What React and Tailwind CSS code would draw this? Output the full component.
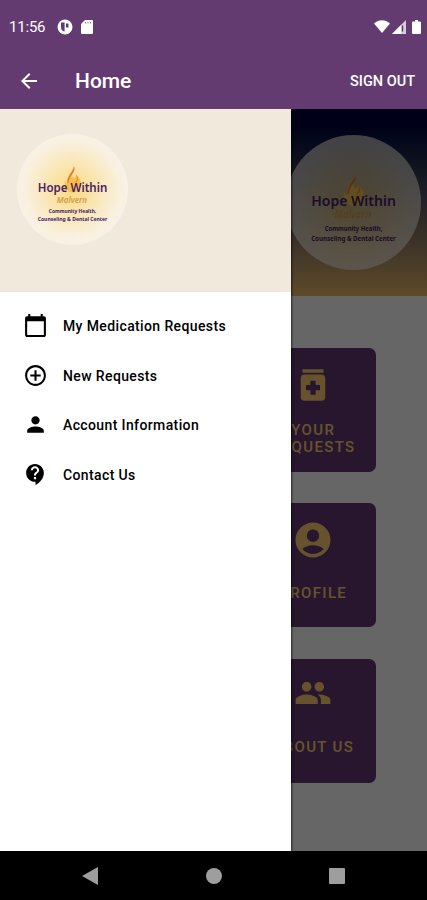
import {
  MdAccountCircle,
  MdArrowBack,
  MdCalendarToday,
  MdContactSupport,
  MdControlPoint,
  MdGroup,
  MdMedication,
  MdPerson,
} from 'react-icons/md';

const menuItems = [
  { label: 'My Medication Requests', icon: MdCalendarToday },
  { label: 'New Requests', icon: MdControlPoint },
  { label: 'Account Information', icon: MdPerson },
  { label: 'Contact Us', icon: MdContactSupport },
];

const Logo = ({ id, className, discOpacity }) => (
  <svg viewBox="0 0 110 110" className={className}>
    <defs>
      <radialGradient id={id}>
        <stop offset="0" stopColor="#fbda80" />
        <stop offset="0.45" stopColor="#fae6b2" />
        <stop offset="0.85" stopColor="#f9f0de" />
        <stop offset="1" stopColor="#f8f1e6" />
      </radialGradient>
    </defs>
    <circle cx="55" cy="55" r="55" fill={`url(#${id})`} opacity={discOpacity} />
    <path d="M56.500 32c1 3-1 6-2 8 0 3 2 4 3 3 1-1 1-2 1-3 4 4 7 9 4 14-2 3-5 4-8 4-5-1-8-6-7-12 .5 2 1 3 2 3-1-7 5-10 7-17z" fill="#f7c04a" />
    <path d="M56.500 32c-1 6-7 9-6.500 17 2-1 1-4 3-7 2-3 5-5 3.500-10z" fill="#e2753a" />
    <path d="M58 40c2 3 2 6-1 8 4 0 5-4 1-8z" fill="#e88a3c" />
    <g textAnchor="middle" fontFamily="'Noto Sans', sans-serif" fontWeight="700" fill="#472069">
      <text x="55" y="57.8" fontSize="11.8" fontWeight="600" textLength="69" lengthAdjust="spacingAndGlyphs">Hope Within</text>
      <text x="54.5" y="68" fontSize="8" fontStyle="italic" fontWeight="600" fill="#cf9c4d" textLength="30" lengthAdjust="spacingAndGlyphs">Malvern</text>
      <text x="55" y="78.5" fontSize="5.6" textLength="47" lengthAdjust="spacingAndGlyphs">Community Health,</text>
      <text x="55" y="86.2" fontSize="5.6" textLength="69" lengthAdjust="spacingAndGlyphs">Counseling &amp; Dental Center</text>
    </g>
  </svg>
);

const StatusBar = () => (
  <div className="flex h-[53px] items-center justify-between pl-[9px] pr-[6px]">
    <div className="flex items-center">
      <span className="w-[37px] pt-px text-[15px] tracking-[-0.2px]">11:56</span>
      <svg viewBox="0 0 16 16" className="ml-[10.5px] size-4">
        <circle cx="8" cy="8" r="7.5" fill="#fff" />
        <path d="M4 3.500h3.600v9C5 12 4 10.500 4 8zM9 4.500h2.500v4H9z" fill="#643b71" />
      </svg>
      <svg viewBox="0 0 12 14" className="ml-2 h-[14px] w-3">
        <path d="M4 0h7q1 0 1 1v12q0 1-1 1H1q-1 0-1-1V4z" fill="#fff" />
        <path d="M4.500 2v1.500M7 2v1.500M9.500 2v1.500" stroke="#643b71" strokeWidth="0.7" />
      </svg>
    </div>
    <div className="flex items-center">
      <svg viewBox="0 0 16 13" className="mr-0.5 h-[13px] w-4">
        <path d="M0 3.500C4.500-1 11.500-1 16 3.500L8 13z" fill="#fff" />
      </svg>
      <svg viewBox="0 0 14 14" className="size-[14px]">
        <path d="M0 14L14 0v14z" fill="#fff" fillOpacity="0.75" />
        <path d="M0 14L9 5v9z" fill="#fff" />
        <path d="M10.500 5.500v6" stroke="#643b71" strokeWidth="1.500" />
      </svg>
      <svg viewBox="0 0 9 14" className="ml-[6px] h-[14px] w-[9px]">
        <path d="M3 0h3v1.500h2q1 0 1 1V13q0 1-1 1H1q-1 0-1-1V2.500q0-1 1-1h2z" fill="#fff" />
      </svg>
    </div>
  </div>
);

const Card = ({ children }) => (
  <div className="flex h-[124px] w-[124.500px] flex-col items-center rounded-[7px] bg-[#613874] text-center text-[15px] font-medium leading-[17.5px] tracking-[1.35px] text-[#ffd070]">
    {children}
  </div>
);

export default function App() {
  return (
    <div className="flex h-[900px] w-[427px] flex-col overflow-hidden bg-black font-['Roboto',sans-serif]">
      <header className="h-[109px] shrink-0 bg-[#643b71] text-white">
        <StatusBar />
        <div className="flex h-14 items-center pl-[17px] pr-3">
          <MdArrowBack className="size-6" />
          <h1 className="ml-[34px] pt-[2px] text-[21px] font-medium">Home</h1>
          <span className="ml-auto pt-[2px] text-[14.5px] font-medium">SIGN OUT</span>
        </div>
      </header>

      <div className="relative h-[742px] shrink-0 overflow-hidden">
        {/* Home screen */}
        <main className="h-full bg-white">
          <div className="flex h-[186.500px] justify-end bg-linear-to-b from-[#02003c] from-8% to-[#ecb964] pr-[6px] pt-[26px]">
            <Logo id="homeGlow" className="size-[135px]" discOpacity="0.66" />
          </div>
          <div className="ml-[251px] flex flex-col gap-[31.500px] pt-[52px]">
            <Card>
              <MdMedication className="mt-[16px] mb-4 size-[42px] shrink-0" />
              YOUR REQUESTS
            </Card>
            <Card>
              <MdAccountCircle className="mt-[16px] mb-6 size-[42px] shrink-0" />
              PROFILE
            </Card>
            <Card>
              <MdGroup className="mt-[15px] mb-[27px] size-[38px] shrink-0" />
              ABOUT US
            </Card>
          </div>
        </main>

        <div className="absolute inset-0 bg-black/60" />

        {/* Navigation drawer */}
        <aside className="absolute inset-y-0 left-0 w-[291px] bg-white shadow-[1px_0_2px_rgba(0,0,0,0.6)]">
          <div className="h-[183px] bg-[#f0e9dc] pl-[16.500px] pt-[24.500px]">
            <Logo id="drawerGlow" className="size-[111px]" discOpacity="1" />
          </div>
          <nav className="flex flex-col pt-[8.500px]">
            {menuItems.map(({ label, icon: Icon }) => (
              <a key={label} className="flex h-[49.700px] items-center gap-[15px] pl-[23px] text-[14px] font-medium tracking-[0.38px] text-black">
                <Icon className="size-[25px]" />
                <span className="pt-[2px]">{label}</span>
              </a>
            ))}
          </nav>
        </aside>
      </div>

      <footer className="flex grow items-center bg-black text-[#9e9e9e]">
        <svg viewBox="0 0 16 18" className="ml-[81.500px] h-[18px] w-4 fill-current">
          <path d="M0 9L16 0v18z" />
        </svg>
        <div className="ml-[108px] size-4 rounded-full bg-current" />
        <div className="ml-[107px] size-4 rounded-[1px] bg-current" />
      </footer>
    </div>
  );
}
